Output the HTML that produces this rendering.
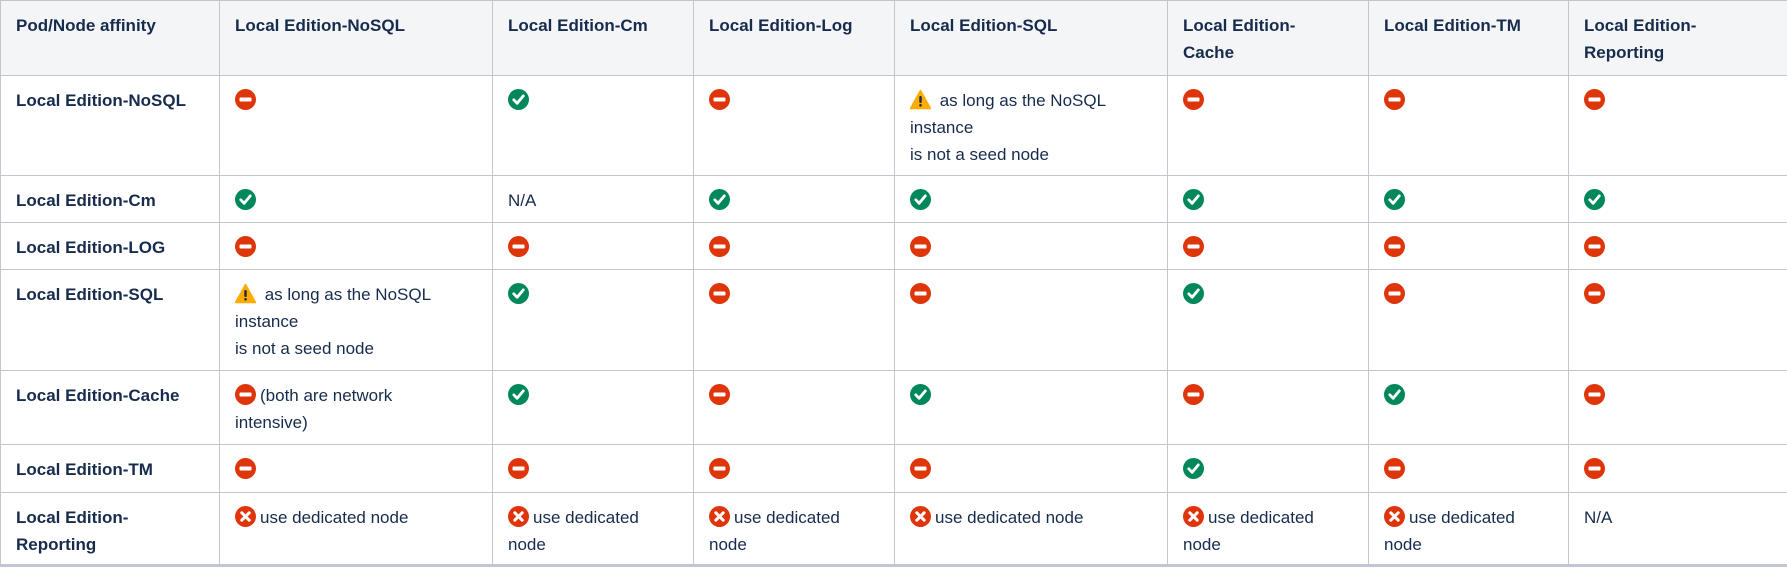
<!DOCTYPE html>
<html><head><meta charset="utf-8"><style>
html,body{margin:0;padding:0;background:#fff;}
body{width:1787px;height:568px;overflow:hidden;font-family:"Liberation Sans",sans-serif;color:#172b4d;font-size:17px;}
table{border-collapse:collapse;table-layout:fixed;width:1787px;}
td,th{border:1px solid #c1c7d0;vertical-align:top;padding:11px 14px 0 15px;line-height:27px;text-align:left;}
th{background:#f4f5f7;font-weight:bold;}
td.h{font-weight:bold;}
tr:last-child td{border-bottom:3px solid #c1c7d0;}
.i{display:inline-block;width:21px;height:21px;vertical-align:-4px;margin-right:4px;}
</style></head><body>
<svg width="0" height="0" style="position:absolute">
<defs>
<g id="no"><circle cx="10.5" cy="10.5" r="10.5" fill="#de350b"/><rect x="4.5" y="8.5" width="12" height="4" rx="1" fill="#fff"/></g>
<g id="ok"><circle cx="10.5" cy="10.5" r="10.5" fill="#00875a"/><path d="M5.8 10.8l3.3 3.5 6.2-7.4" stroke="#fff" stroke-width="2.8" fill="none" stroke-linecap="round" stroke-linejoin="round"/></g>
<g id="x"><circle cx="10.5" cy="10.5" r="10.5" fill="#de350b"/><path d="M6.8 6.8l7.4 7.4M14.2 6.8l-7.4 7.4" stroke="#fff" stroke-width="3" stroke-linecap="round"/></g>
<g id="w"><path d="M10.5 1.5L20.5 19.5H0.5Z" fill="#ffab00" stroke="#ffab00" stroke-width="1.5" stroke-linejoin="round"/><rect x="9.3" y="7" width="2.4" height="7" rx="1" fill="#172b4d"/><circle cx="10.5" cy="16.3" r="1.3" fill="#172b4d"/></g>
</defs></svg>
<table>
<colgroup><col style="width:219px"><col style="width:273px"><col style="width:201px"><col style="width:201px"><col style="width:273px"><col style="width:201px"><col style="width:200px"><col style="width:219px"></colgroup>
<tr style="height:75px"><th>Pod/Node affinity</th><th>Local Edition-NoSQL</th><th>Local Edition-Cm</th><th>Local Edition-Log</th><th>Local Edition-SQL</th><th>Local Edition-<br>Cache</th><th>Local Edition-TM</th><th>Local Edition-<br>Reporting</th></tr>
<tr style="height:100px"><td class="h">Local Edition-NoSQL</td><td><svg class="i"><use href="#no"/></svg></td><td><svg class="i"><use href="#ok"/></svg></td><td><svg class="i"><use href="#no"/></svg></td><td><svg class="i"><use href="#w"/></svg> as long as the NoSQL instance<br>is not a seed node</td><td><svg class="i"><use href="#no"/></svg></td><td><svg class="i"><use href="#no"/></svg></td><td><svg class="i"><use href="#no"/></svg></td></tr>
<tr style="height:47px"><td class="h">Local Edition-Cm</td><td><svg class="i"><use href="#ok"/></svg></td><td>N/A</td><td><svg class="i"><use href="#ok"/></svg></td><td><svg class="i"><use href="#ok"/></svg></td><td><svg class="i"><use href="#ok"/></svg></td><td><svg class="i"><use href="#ok"/></svg></td><td><svg class="i"><use href="#ok"/></svg></td></tr>
<tr style="height:47px"><td class="h">Local Edition-LOG</td><td><svg class="i"><use href="#no"/></svg></td><td><svg class="i"><use href="#no"/></svg></td><td><svg class="i"><use href="#no"/></svg></td><td><svg class="i"><use href="#no"/></svg></td><td><svg class="i"><use href="#no"/></svg></td><td><svg class="i"><use href="#no"/></svg></td><td><svg class="i"><use href="#no"/></svg></td></tr>
<tr style="height:101px"><td class="h">Local Edition-SQL</td><td><svg class="i"><use href="#w"/></svg> as long as the NoSQL<br>instance<br>is not a seed node</td><td><svg class="i"><use href="#ok"/></svg></td><td><svg class="i"><use href="#no"/></svg></td><td><svg class="i"><use href="#no"/></svg></td><td><svg class="i"><use href="#ok"/></svg></td><td><svg class="i"><use href="#no"/></svg></td><td><svg class="i"><use href="#no"/></svg></td></tr>
<tr style="height:74px"><td class="h">Local Edition-Cache</td><td><svg class="i"><use href="#no"/></svg>(both are network<br>intensive)</td><td><svg class="i"><use href="#ok"/></svg></td><td><svg class="i"><use href="#no"/></svg></td><td><svg class="i"><use href="#ok"/></svg></td><td><svg class="i"><use href="#no"/></svg></td><td><svg class="i"><use href="#ok"/></svg></td><td><svg class="i"><use href="#no"/></svg></td></tr>
<tr style="height:48px"><td class="h">Local Edition-TM</td><td><svg class="i"><use href="#no"/></svg></td><td><svg class="i"><use href="#no"/></svg></td><td><svg class="i"><use href="#no"/></svg></td><td><svg class="i"><use href="#no"/></svg></td><td><svg class="i"><use href="#ok"/></svg></td><td><svg class="i"><use href="#no"/></svg></td><td><svg class="i"><use href="#no"/></svg></td></tr>
<tr style="height:73px"><td class="h">Local Edition-<br>Reporting</td><td><svg class="i"><use href="#x"/></svg>use dedicated node</td><td><svg class="i"><use href="#x"/></svg>use dedicated node</td><td><svg class="i"><use href="#x"/></svg>use dedicated node</td><td><svg class="i"><use href="#x"/></svg>use dedicated node</td><td><svg class="i"><use href="#x"/></svg>use dedicated node</td><td><svg class="i"><use href="#x"/></svg>use dedicated node</td><td>N/A</td></tr>
</table>
</body></html>
